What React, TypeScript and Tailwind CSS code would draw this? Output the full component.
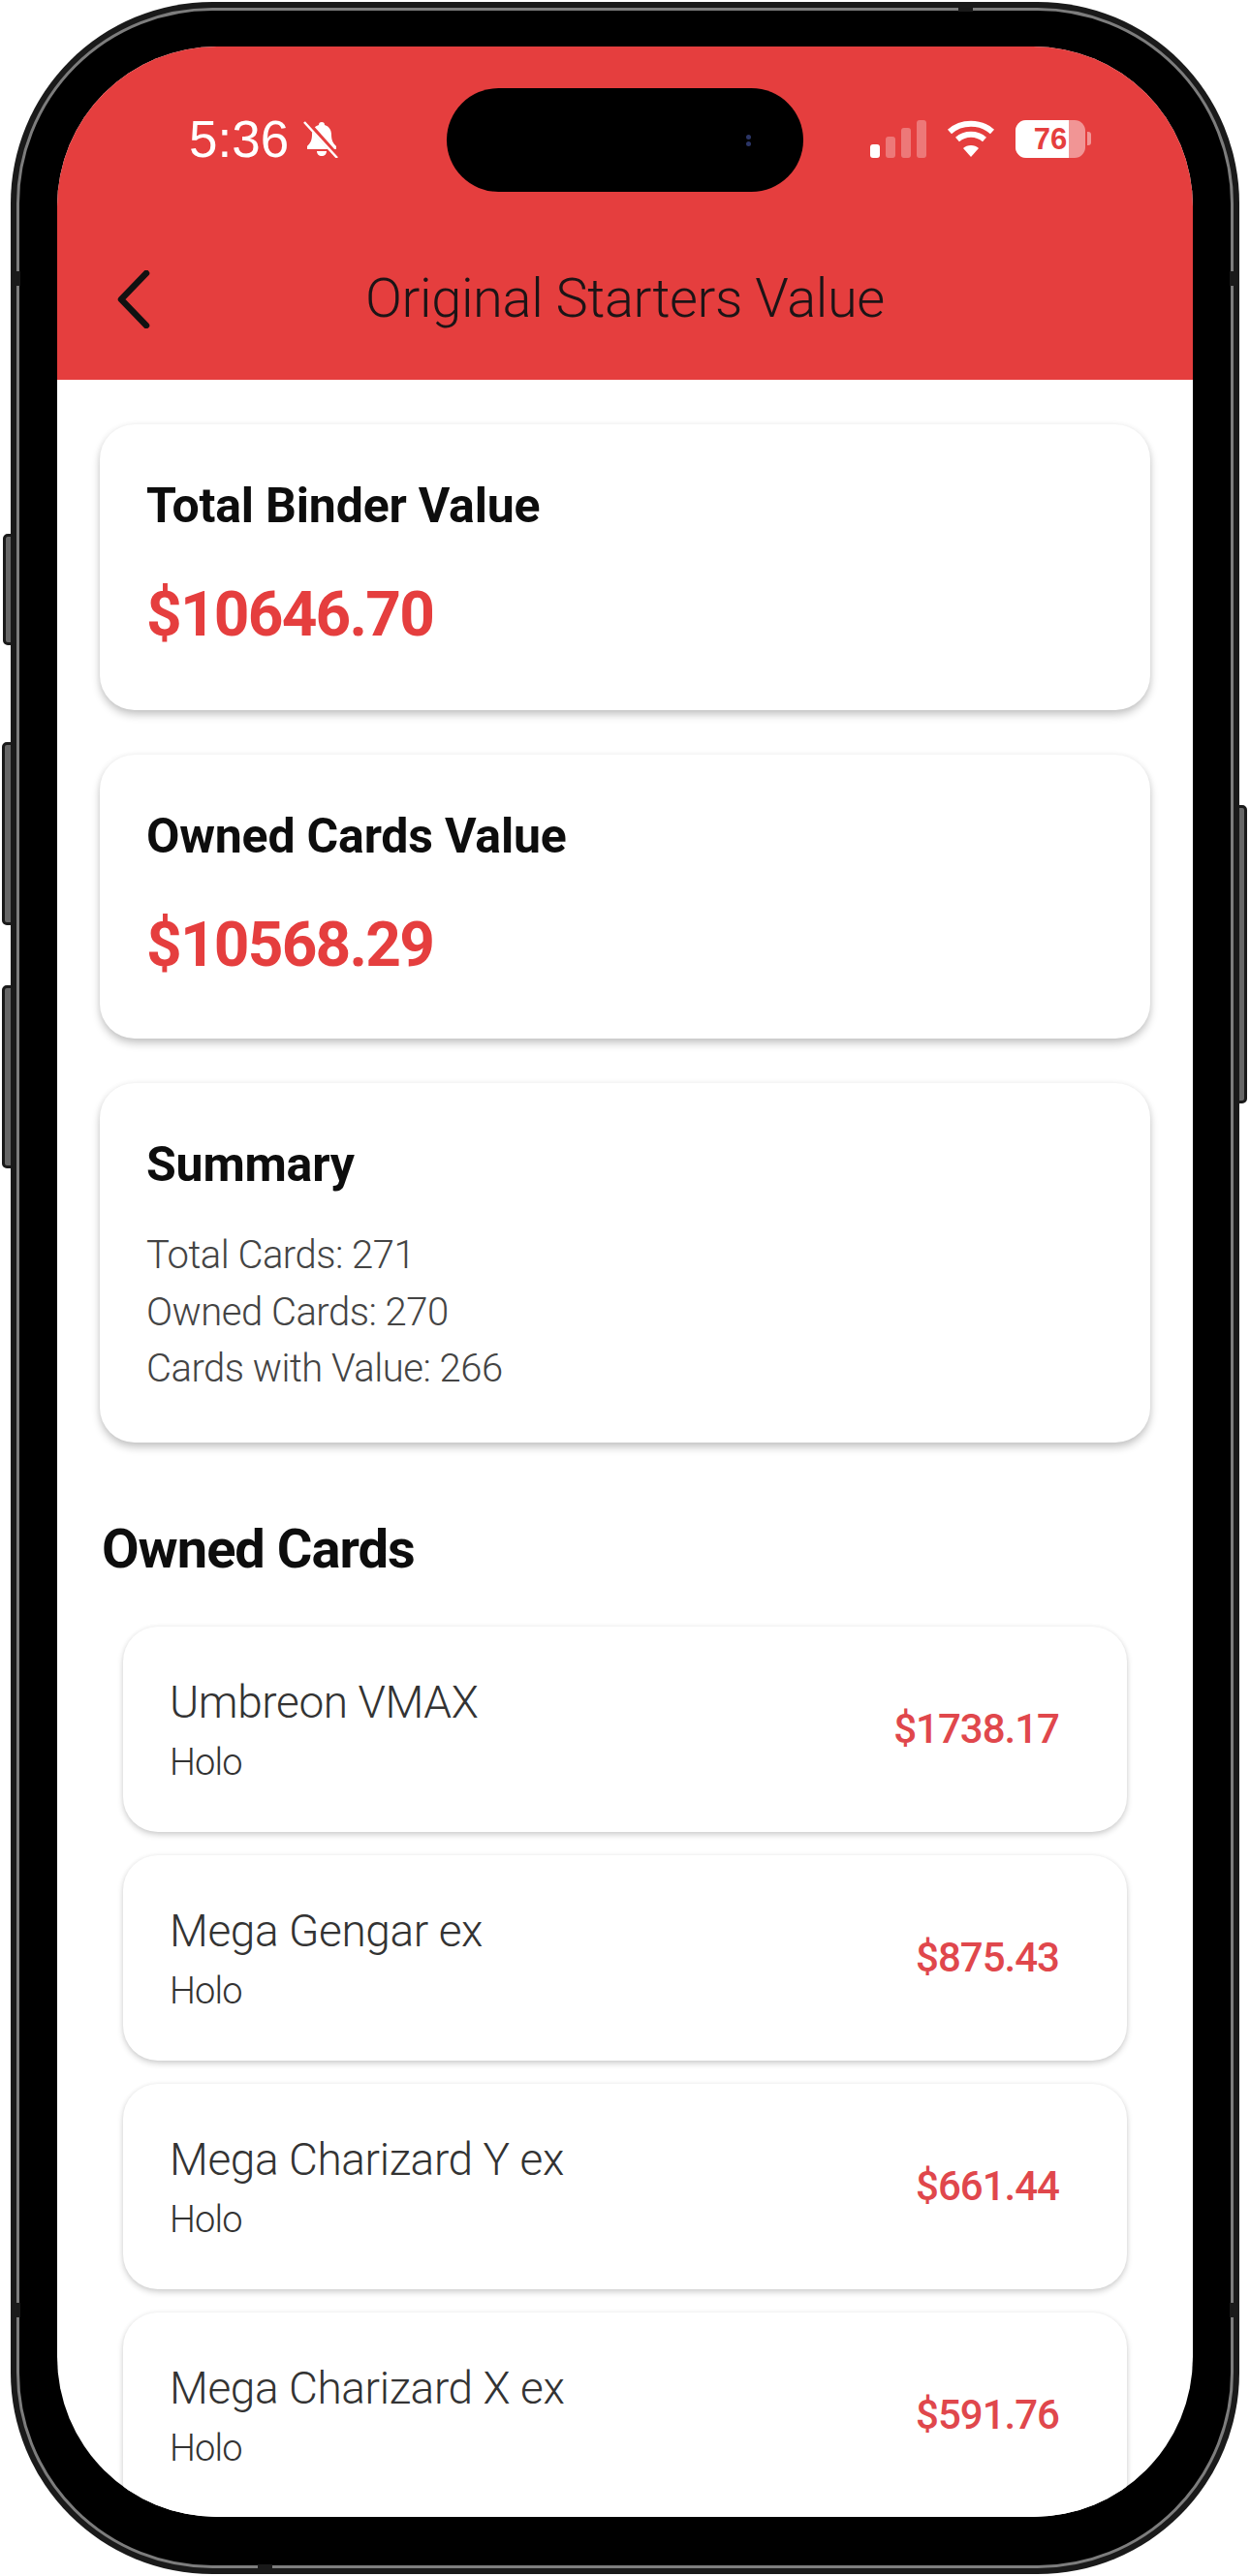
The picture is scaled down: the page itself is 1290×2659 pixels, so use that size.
import React from 'react';

const ownedCards = [
  { name: 'Umbreon VMAX', variant: 'Holo', price: '$1738.17' },
  { name: 'Mega Gengar ex', variant: 'Holo', price: '$875.43' },
  { name: 'Mega Charizard Y ex', variant: 'Holo', price: '$661.44' },
  { name: 'Mega Charizard X ex', variant: 'Holo', price: '$591.76' },
];

const BellSlash = () => (
  <svg width="40" height="40" viewBox="0 0 40 40" className="ml-[14px]">
    <path d="M20 3c-2 0-3 1.300-3 3-5 1.500-7 5.500-7 10 0 6-2 9-5 12v3h30v-3c-3-3-5-6-5-12 0-4.500-2-8.500-7-10 0-1.700-1-3-3-3z" fill="#fff" />
    <path d="M15 33h10c0 3-2 5-5 5s-5-2-5-5z" fill="#fff" />
    <path d="M3 1l33 37" stroke="#e53e3e" strokeWidth="5" />
    <path d="M2 3l34 37" stroke="#fff" strokeWidth="2.500" />
  </svg>
);

const Signal = () => (
  <div className="flex items-end gap-[6px] h-[39px]">
    <div className="w-[10px] h-[14px] rounded-[3px] bg-white" />
    <div className="w-[10px] h-[22px] rounded-[3px] bg-white/30" />
    <div className="w-[10px] h-[31px] rounded-[3px] bg-white/30" />
    <div className="w-[10px] h-[39px] rounded-[3px] bg-white/30" />
  </div>
);

const Wifi = () => (
  <svg width="52" height="40" viewBox="0 0 50 40" fill="none" stroke="#fff" strokeWidth="6">
    <path d="M3 13c12-11 32-11 44 0" />
    <path d="M11 21c8-7 20-7 28 0" />
    <path d="M25 39l-8-9c4-4 12-4 16 0z" fill="#fff" stroke="none" />
  </svg>
);

const Battery = () => (
  <div className="flex items-center gap-[2px]">
    <div className="relative w-[72px] h-[39px] rounded-[11px] bg-white/45 overflow-hidden">
      <div className="w-[55px] h-full bg-white" />
      <span className="absolute inset-0 flex items-center justify-center font-['Liberation_Sans',sans-serif] font-bold text-[31px] leading-none text-[#e53e3e]">
        76
      </span>
    </div>
    <div className="w-[4px] h-[14px] rounded-r-[3px] bg-white/45" />
  </div>
);

const Card: React.FC<{ title: string; children: React.ReactNode; className?: string }> = ({ title, children, className }) => (
  <div className={`rounded-[36px] bg-white px-[48px] shadow-[0_5px_9px_rgba(0,0,0,0.22),0_0_6px_rgba(0,0,0,0.05)] ${className}`}>
    <h3 className="text-[50px] leading-[58px] font-bold tracking-[-0.2px] text-[#0d0d0d]">{title}</h3>
    {children}
  </div>
);

export default function App() {
  return (
    <div className="relative w-[1290px] h-[2659px] bg-white overflow-hidden font-['Roboto',sans-serif]">
      {/* side buttons */}
      <div className="absolute left-[3px] top-[551px] w-[14px] h-[115px] rounded-l-[5px] bg-[#666] border-[3px] border-[#1a1a1a]" />
      <div className="absolute left-[2px] top-[766px] w-[14px] h-[189px] rounded-l-[5px] bg-[#666] border-[3px] border-[#1a1a1a]" />
      <div className="absolute left-[2px] top-[1017px] w-[14px] h-[189px] rounded-l-[5px] bg-[#666] border-[3px] border-[#1a1a1a]" />
      <div className="absolute left-[1275px] top-[831px] w-[12px] h-[308px] rounded-r-[5px] bg-[#666] border-[3px] border-[#1a1a1a]" />

      {/* phone frame */}
      <div className="relative ml-[11px] mt-[2px] w-[1268px] h-[2655px] rounded-[208px] bg-[#1a1a1a] p-[6px]">
        <div className="h-full rounded-[202px] border-[3px] border-[#7d7d7d] bg-black pl-[39px] pr-[39px] pt-[37px] pb-[50px]">
          <div className="h-full rounded-[165px] bg-white overflow-hidden flex flex-col">
            {/* header */}
            <div className="h-[344px] shrink-0 bg-[#e53e3e] flex flex-col">
              <div className="h-[190px] shrink-0 pt-[43px] pl-[136px] pr-[105px] flex">
                <div className="h-[104px] flex items-center w-[266px]">
                  <span className="font-['Liberation_Sans',sans-serif] text-[53px] leading-none text-white">5:36</span>
                  <BellSlash />
                </div>
                <div className="w-[368px] h-[107px] rounded-full bg-black flex items-center justify-end pr-[54px]">
                  <div className="flex flex-col gap-[2px]">
                    <div className="w-[5px] h-[5px] rounded-full bg-[#2b3566]" />
                    <div className="w-[5px] h-[5px] rounded-full bg-[#2b3566]" />
                  </div>
                </div>
                <div className="ml-auto h-[104px] flex items-center gap-[20px]">
                  <Signal />
                  <Wifi />
                  <Battery />
                </div>
              </div>
              <div className="relative flex-1 flex items-start justify-center pt-[38px]">
                <svg width="36" height="60" viewBox="0 0 36 60" fill="none" stroke="#111" strokeWidth="6.500" strokeLinecap="round" strokeLinejoin="round" className="absolute left-[61px] top-[41px]">
                  <path d="M31 3L5 30l26 27" />
                </svg>
                <h1 className="text-[56px] leading-[64px] font-light tracking-[-0.4px] text-[#1c1416]">Original Starters Value</h1>
              </div>
            </div>

            {/* body */}
            <div className="flex-1 px-[44px] pt-[46px] flex flex-col gap-[46px]">
              <Card title="Total Binder Value" className="h-[295px] pt-[55px]">
                <p className="mt-[48px] text-[64px] leading-[72px] font-bold tracking-[-1.8px] text-[#e53e3e]">$10646.70</p>
              </Card>
              <Card title="Owned Cards Value" className="h-[293px] pt-[55px]">
                <p className="mt-[48px] text-[64px] leading-[72px] font-bold tracking-[-1.8px] text-[#e53e3e]">$10568.29</p>
              </Card>
              <Card title="Summary" className="h-[371px] pt-[55px]">
                <div className="mt-[36px] text-[40px] leading-[58.500px] font-light tracking-[-0.5px] text-[#444]">
                  <p>Total Cards: 271</p>
                  <p>Owned Cards: 270</p>
                  <p>Cards with Value: 266</p>
                </div>
              </Card>
              <div>
                <h2 className="ml-[2px] mt-[32px] text-[56px] leading-[64px] font-bold tracking-[-1px] text-[#0d0d0d]">Owned Cards</h2>
                <div className="mt-[48px] mx-[24px] flex flex-col gap-[24px]">
                  {ownedCards.map((card) => (
                    <div
                      key={card.name}
                      className="h-[212px] shrink-0 rounded-[36px] bg-white pl-[48px] pr-[70px] flex items-center justify-between shadow-[0_3px_6px_rgba(0,0,0,0.18),0_0_5px_rgba(0,0,0,0.05)]"
                    >
                      <div>
                        <p className="text-[46px] leading-[56px] font-light tracking-[-0.4px] text-[#333]">{card.name}</p>
                        <p className="mt-[11px] text-[38px] leading-[46px] font-light tracking-[-0.8px] text-[#333]">{card.variant}</p>
                      </div>
                      <p className="text-[42px] leading-[54px] font-medium tracking-[-1px] text-[#e0474c]">{card.price}</p>
                    </div>
                  ))}
                </div>
              </div>
            </div>
          </div>
        </div>
        {/* antenna bands */}
        <div className="absolute left-0 top-[278px] w-[10px] h-[15px] bg-[#1a1a1a]" />
        <div className="absolute right-0 top-[278px] w-[10px] h-[15px] bg-[#1a1a1a]" />
        <div className="absolute left-0 top-[2375px] w-[10px] h-[15px] bg-[#1a1a1a]" />
        <div className="absolute right-0 top-[2375px] w-[10px] h-[15px] bg-[#1a1a1a]" />
        <div className="absolute top-0 left-[978px] w-[15px] h-[10px] bg-[#1a1a1a]" />
        <div className="absolute bottom-0 left-[255px] w-[15px] h-[10px] bg-[#1a1a1a]" />
      </div>
    </div>
  );
}
